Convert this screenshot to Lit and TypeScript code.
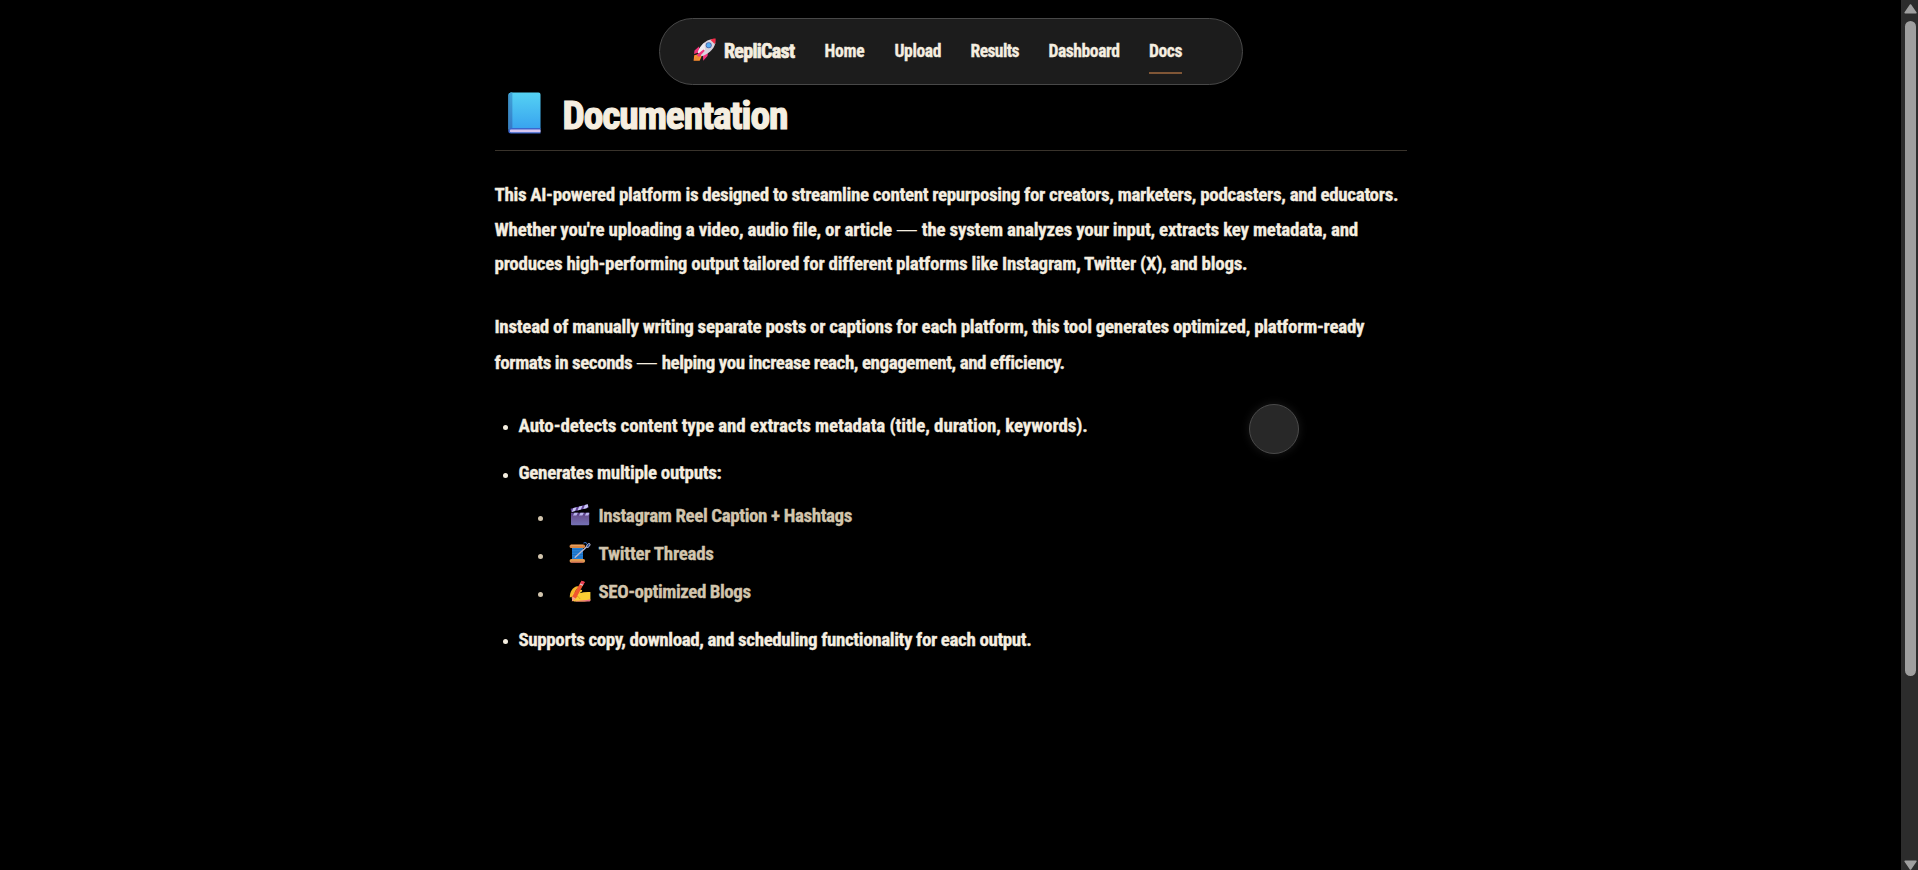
import { LitElement, html, css, svg } from "lit";
import { customElement } from "lit/decorators.js";

const rocket = html`<svg class="rocket" viewBox="0 0 23 23">
  ${svg`<path d="M6 8.5 1.5 12.5 1 16l6-2zM10 17l5-3.5-.5 4.5-4.3 4.7z" fill="#f2337c"/>
  <path d="M1.2 17.2 6.5 16l2 2.5-1.8 4.2H.6z" fill="#ff8e2c"/>
  <path d="M2.5 19 6.5 17l1 1-2.5 4H.8z" fill="#e98a35"/>
  <path d="M4.8 14.5C7 7.5 12.5 1.8 19 1.2l3 .6.3 3.4C20.5 12 15 16.3 8.6 18.2z" fill="#d9d3de"/>
  <path d="M4.8 14.5C6 10.5 8.6 7 11.6 4.6L12 12l-5 4.6z" fill="#efebf1"/>
  <path d="M17.3 1.7C19.3.6 21.3.3 22.6.4c.2 1.6 0 3.4-.9 5.6z" fill="#f32c48"/>
  <circle cx="15.7" cy="7.3" r="3" fill="#4a66a8"/><circle cx="15.7" cy="7.3" r="2.2" fill="#55adf5"/>
  <path d="M3.5 17 10.5 11.5l1.2 1.2L6.2 19z" fill="#f2337c"/>`}
</svg>`;

const book = html`<svg class="book" viewBox="0 0 34 43">
  ${svg`<defs><linearGradient id="cover" x1="0" y1="0" x2="0" y2="1"><stop offset="0" stop-color="#55d2f3"/><stop offset="1" stop-color="#38a3ef"/></linearGradient>
  <linearGradient id="spine" x1="0" y1="0" x2="0" y2="1"><stop offset="0" stop-color="#3fa5d8"/><stop offset="1" stop-color="#3579c8"/></linearGradient></defs>
  <path d="M3 .4h28.500a2 2 0 0 1 2 2V38H.5V3A2.600 2.600 0 0 1 3 .4z" fill="url(#cover)"/>
  <path d="M3 .4h1.500V38H.5V3A2.600 2.600 0 0 1 3 .4z" fill="url(#spine)"/>
  <path d="M3 37h30.500v5.600H3a2.800 2.800 0 0 1 0-5.600z" fill="#3b66cd"/>
  <path d="M3.200 38.600h30.300v2.700H3.200a1.300 1.300 0 0 1 0-2.700z" fill="#d7c6ef"/>
  <path d="M1 39V3" stroke="#3d86bd"/>`}
</svg>`;

const clapper = html`<svg class="emoji" viewBox="0 0 22 22">
  ${svg`<defs><linearGradient id="slate" x1="0" y1="0" x2="0" y2="1"><stop offset="0" stop-color="#674a86"/><stop offset="1" stop-color="#7471b6"/></linearGradient></defs>
  <path d="M2 9h18.200v11.200a1 1 0 0 1-1 1H3a1 1 0 0 1-1-1z" fill="url(#slate)"/>
  <path d="M1.600 4.800 18.700.3l.8 3.400L2.400 8z" fill="#65479b"/>
  <path d="m4.400 4.100 3.300-.8-1.700 3.800-3.300.8zM10.200 2.600l3.300-.9-1.700 3.900-3.300.8zM15.900 1.100l2.800-.8.600 2.200-1.800 1.700-3.200.8z" fill="#c8c5f5"/>
  <path d="M2 8.700h18.200v2.800H2z" fill="#5d438a"/>
  <path d="M5.500 8.700h3.400l-1.500 2.800H4zM11.500 8.700h3.400l-1.500 2.800H10zM17.400 8.700h2.800v1l-1 1.800h-3.300z" fill="#bab5ed"/>`}
</svg>`;

const thread = html`<svg class="emoji" viewBox="0 0 22 22">
  ${svg`<path d="M3 5h11v12H3z" fill="#2580d6"/><path d="M3 7.500h11M3 10h11M3 12.500h11M3 15h11" stroke="#1767b9" stroke-width=".7"/>
  <rect x=".6" y="2.500" width="15.500" height="3.500" rx="1.600" fill="#d98642"/><path d="M2 3.300h12" stroke="#f0ad6d" stroke-width=".8"/>
  <rect x=".6" y="17" width="15.500" height="3.800" rx="1.700" fill="#e29a50"/><path d="M2 20.200h12" stroke="#c25d58"/>
  <path d="M14.500 1c2-.8 3.500-.4 3.500 1.500" stroke="#3479d6" fill="none"/>
  <path d="M6.200 15.300 18 4.500" stroke="#b8b8d0" stroke-width="1.500" stroke-linecap="round"/>
  <ellipse cx="19.300" cy="3.500" rx="1.300" ry="2.300" transform="rotate(38 19.300 3.500)" fill="#234a91" stroke="#b8b8d0" stroke-width=".9"/>`}
</svg>`;

const writing = html`<svg class="emoji" viewBox="0 0 22 22">
  ${svg`<path d="M.8 17.500C.8 12 3.500 7.500 8 6.300c1.800-.3 2 1.300.8 2.200C6.500 10 5.500 12.500 5 16z" fill="#f5b82b"/>
  <path d="M3.500 14c2.500-1.800 5-3.300 8.200-4.300 1.500-.3 2.100 1.200.8 2l-2 1.500c3.500-1 7-1.500 10.900-1.200v8.500l-6 .9H5c-2.300-1-3-4.500-1.500-7.400z" fill="#fbcf34"/>
  <path d="M5.500 20.500c4 .4 9 .2 15.900-1.200v1.300q0 .8-.8.800H7z" fill="#eb7180"/>
  <path d="M6 15.500c2.300.5 4.200 1.500 5 3.500" stroke="#e7a026" fill="none"/>
  <path d="m12.600.8 3.200 1.300-8.600 16-4.300 3.300.4-5.200z" fill="#f1562f"/>
  <path d="m12.600.8 3.200 1.300-1.500 2.700L11.200 3.500z" fill="#e63e58"/>
  <path d="m11.200 3.500 3.100 1.300-.6 1-3-1.400z" fill="#d7c7d9"/>
  <path d="m3.300 16.500 3.500 1.900-3.900 3z" fill="#f8a28b"/>`}
</svg>`;

@customElement("app-root")
export class AppRoot extends LitElement {
  static styles = css`
    :host {
      display: grid;
      grid-template-columns: 1fr 17px;
      height: 870px;
      overflow: hidden;
      background: #000;
      color: #f5eee0;
      font-family: "Roboto Condensed", "Roboto", sans-serif;
      font-weight: 700;
      font-size: 19px;
      line-height: 34.2px;
      position: relative;
      white-space: nowrap;
      -webkit-text-stroke: 0.3px;
    }
    svg { display: block; flex: none; }
    .page { display: flex; flex-direction: column; align-items: center; padding-top: 18px; }
    nav {
      box-sizing: border-box;
      width: 584px;
      height: 67px;
      border: 1px solid #484848;
      border-radius: 34px;
      background: #1c1c1c;
      display: flex;
      align-items: flex-start;
      padding-left: 33px;
      font-size: 17.6px;
      line-height: 24px;
    }
    .rocket { width: 23px; height: 23px; margin: 19px 8.500px 0 0; }
    .brand { width: 100.500px; padding-top: 19.500px; font-size: 20px; letter-spacing: -0.7px; -webkit-text-stroke: 0.7px; }
    .link { margin-right: 30px; padding: 20px 0 9px; }
    .home { width: 40px; letter-spacing: -0.26px; }
    .upload { width: 46px; letter-spacing: -0.42px; }
    .results { width: 48px; letter-spacing: -0.6px; }
    .dash { width: 70.500px; letter-spacing: -0.45px; }
    .docs { width: 33px; letter-spacing: -0.45px; border-bottom: 2px solid #805636; }
    main { width: 912px; }
    header {
      height: 65px;
      border-bottom: 1px solid #39332b;
      display: flex;
      padding-left: 13px;
    }
    .book { width: 33px; height: 42px; margin: 6.500px 22px 0 0; }
    h1 { margin: 7.500px 0 0; font-size: 39.500px; line-height: 46px; letter-spacing: -1.1px; -webkit-text-stroke: 1.2px; }
    p { margin: 0 0 29.200px; }
    .intro { margin-top: 26.500px; }
    .line { display: block; }
    .dash-mark { font-family: "Lato", sans-serif; font-weight: 400; letter-spacing: 0; display: inline-block; width: 21.500px; text-align: center; transform: scaleX(1.6); -webkit-text-stroke: 0; }
    .a { letter-spacing: -0.33px; }
    .b { letter-spacing: -0.22px; }
    .c { letter-spacing: -0.27px; }
    .d { letter-spacing: -0.28px; }
    .e { letter-spacing: -0.44px; }
    .f { letter-spacing: -0.11px; }
    .g { letter-spacing: -0.3px; }
    .h { letter-spacing: -0.4px; }
    .i { letter-spacing: -0.28px; }
    .j { letter-spacing: -0.45px; }
    .k { letter-spacing: -0.39px; }
    ul { list-style: none; margin: 0; padding: 0; display: flex; flex-direction: column; gap: 13.200px; }
    .row { display: flex; align-items: center; padding-left: 8px; }
    .row::before {
      content: "";
      width: 5px;
      height: 5px;
      border-radius: 50%;
      background: currentColor;
      margin: 4px 11px 0 0;
      flex: none;
    }
    .nested { gap: 3.800px; padding: 8.500px 0 0.500px 35px; color: #d2c5ad; }
    .nested .row::before { margin-right: 26px; }
    .emoji { width: 22px; height: 22px; margin: -3px 8px 0 0; }
    .cursor {
      position: absolute;
      left: 1249px;
      top: 404px;
      box-sizing: border-box;
      width: 50px;
      height: 50px;
      border-radius: 50%;
      background: #282828;
      border: 1px solid #4a4a4a;
      box-shadow: 0 0 10px rgba(255, 255, 255, 0.1);
    }
    .scroll { background: #2c2c2c; display: flex; flex-direction: column; align-items: center; height: 870px; padding-left: 1px; box-sizing: border-box; }
    .arrow { width: 13px; height: 10px; margin-top: 4px; }
    .thumb { width: 11px; height: 655px; margin-top: 7px; border-radius: 6px; background: #9f9f9f; }
    .down { transform: scaleY(-1); margin: auto 0 0; }
  `;

  private arrow(extra: string) {
    return html`<svg class="arrow ${extra}" viewBox="0 0 13 10"><path d="M6.500 1 11.800 8.800H1.200z" fill="#9f9f9f" stroke="#9f9f9f" stroke-width="1.600" stroke-linejoin="round"/></svg>`;
  }

  render() {
    return html`
      <div class="page">
        <nav>
          ${rocket}
          <span class="brand">RepliCast</span>
          <span class="link home">Home</span>
          <span class="link upload">Upload</span>
          <span class="link results">Results</span>
          <span class="link dash">Dashboard</span>
          <span class="link docs">Docs</span>
        </nav>
        <main>
          <header>${book}<h1>Documentation</h1></header>
          <p class="intro">
            <span class="line a">This AI-powered platform is designed to streamline content repurposing for creators, marketers, podcasters, and educators.</span>
            <span class="line b">Whether you're uploading a video, audio file, or article <span class="dash-mark">—</span> the system analyzes your input, extracts key metadata, and</span>
            <span class="line c">produces high-performing output tailored for different platforms like Instagram, Twitter (X), and blogs.</span>
          </p>
          <p>
            <span class="line d">Instead of manually writing separate posts or captions for each platform, this tool generates optimized, platform-ready</span>
            <span class="line e">formats in seconds <span class="dash-mark">—</span> helping you increase reach, engagement, and efficiency.</span>
          </p>
          <ul>
            <li><div class="row f">Auto-detects content type and extracts metadata (title, duration, keywords).</div></li>
            <li>
              <div class="row g">Generates multiple outputs:</div>
              <ul class="nested">
                <li class="row h">${clapper}Instagram Reel Caption + Hashtags</li>
                <li class="row i">${thread}Twitter Threads</li>
                <li class="row j">${writing}SEO-optimized Blogs</li>
              </ul>
            </li>
            <li><div class="row k">Supports copy, download, and scheduling functionality for each output.</div></li>
          </ul>
        </main>
      </div>
      <div class="scroll">${this.arrow("")}<div class="thumb"></div>${this.arrow("down")}</div>
      <div class="cursor"></div>
    `;
  }
}
